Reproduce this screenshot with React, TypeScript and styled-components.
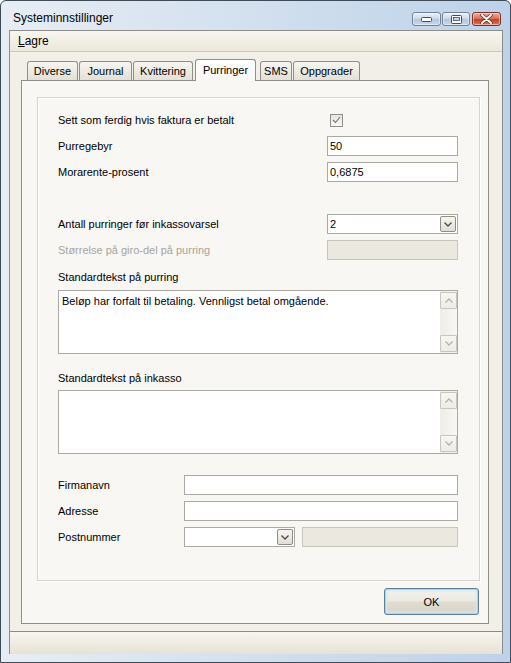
import React from 'react';
import styled, { createGlobalStyle } from 'styled-components';

const GlobalStyle = createGlobalStyle`
  html, body {
    margin: 0;
    padding: 0;
    width: 511px;
    height: 663px;
    overflow: hidden;
    background: #ffffff;
  }
  body {
    font-family: "Liberation Sans", Arial, sans-serif;
    font-size: 11px;
    color: #000;
  }
  * { box-sizing: border-box; }
`;

const Window = styled.div`
  width: 511px;
  height: 663px;
  display: flex;
  flex-direction: column;
  border: 1px solid #3f4b58;
  border-radius: 6px 6px 0 0;
  padding: 0 7px 8px 8px;
  background: linear-gradient(to right, #e7edf4 0%, #d4e1ef 45%, #bdd2e9 100%);
`;

const TitleBar = styled.div`
  height: 29px;
  display: flex;
  justify-content: space-between;
  align-items: flex-start;
`;

const Title = styled.div`
  margin-top: 10px;
  padding-left: 4px;
  font-size: 12px;
  line-height: 15px;
  color: #000;
`;

const CaptionGroup = styled.div`
  display: flex;
  gap: 2px;
  margin-top: 11px;
  margin-right: 2px;
`;

const CaptionPair = styled.div`
  display: flex;
  gap: 1px;
`;

const CaptionButton = styled.div<{ $close?: boolean; $w: number }>`
  width: ${p => p.$w}px;
  height: 14px;
  border: 1px solid ${p => (p.$close ? '#7b3226' : '#6f8196')};
  border-radius: 3px;
  display: flex;
  align-items: center;
  justify-content: center;
  background: ${p =>
    p.$close
      ? 'linear-gradient(#eab0a2 0%, #d9705b 45%, #c2402a 55%, #d67a62 100%)'
      : 'linear-gradient(#eef3f9 0%, #ccd9e8 45%, #b3c6dc 55%, #c9d8ea 100%)'};
  box-shadow: inset 0 0 0 1px rgba(255, 255, 255, 0.45);
`;

const Client = styled.div`
  flex: 1;
  display: flex;
  flex-direction: column;
  background: #f1efe8;
  border: 1px solid #8d8c86;
  border-bottom: none;
`;

const MenuBar = styled.div`
  height: 21px;
  display: flex;
  align-items: center;
  padding-left: 8px;
  background: linear-gradient(#f8f6ef, #ebe7da);
  border-bottom: 1px solid #cdc9bc;
  font-size: 12px;
`;

const Body = styled.div`
  flex: 1;
  display: flex;
  flex-direction: column;
  padding: 7px 13px 7px 11px;
`;

const TabStrip = styled.div`
  height: 22px;
  display: flex;
  align-items: flex-end;
  padding-left: 6px;
  position: relative;
  z-index: 2;
`;

const Tab = styled.div<{ $w: number; $ml: number; $active?: boolean }>`
  width: ${p => p.$w}px;
  margin-left: ${p => p.$ml}px;
  height: ${p => (p.$active ? 22 : 19)}px;
  margin-bottom: ${p => (p.$active ? 0 : 1)}px;
  border: 1px solid #8f8e88;
  border-bottom: none;
  border-radius: 3px 3px 0 0;
  display: flex;
  align-items: center;
  justify-content: center;
  padding-bottom: ${p => (p.$active ? 2 : 0)}px;
  background: ${p =>
    p.$active ? 'linear-gradient(#fdfdfc, #f8f7f3)' : 'linear-gradient(#f6f5f1, #e3e0d5)'};
  color: #000;
`;

const Panel = styled.div`
  flex: 1;
  display: flex;
  flex-direction: column;
  margin-top: -1px;
  border: 1px solid #8f8e88;
  background: #f8f7f3;
  padding: 16px 8px 8px 15px;
`;

const Group = styled.div`
  flex: 1;
  display: flex;
  flex-direction: column;
  border: 1px solid #d6d3ca;
  box-shadow: 1px 1px 0 #ffffff, inset 1px 1px 0 #ffffff;
  padding: 12px 21px 0 20px;
`;

const Row = styled.div<{ $mt: number; $h?: number }>`
  display: flex;
  align-items: center;
  height: ${p => p.$h ?? 20}px;
  margin-top: ${p => p.$mt}px;
`;

const Label = styled.div<{ $disabled?: boolean; $w?: number }>`
  flex: ${p => (p.$w ? `0 0 ${p.$w}px` : '1')};
  color: ${p => (p.$disabled ? '#a6a49e' : '#000')};
  white-space: nowrap;
`;

const Cell = styled.div<{ $w?: number }>`
  flex: ${p => (p.$w ? `0 0 ${p.$w}px` : '1')};
  display: flex;
  gap: 7px;
`;

const Field = styled.div<{ $disabled?: boolean; $w?: number }>`
  flex: ${p => (p.$w ? `0 0 ${p.$w}px` : '1')};
  height: 20px;
  display: flex;
  align-items: center;
  padding: 0 1px 0 2px;
  border: 1px solid ${p => (p.$disabled ? '#c7c4bb' : '#abaaa2')};
  background: ${p => (p.$disabled ? '#ebe8e0' : '#ffffff')};
`;

const FieldText = styled.span`
  flex: 1;
  white-space: nowrap;
`;

const DropButton = styled.div`
  width: 16px;
  height: 16px;
  border: 1px solid #8f8c84;
  border-radius: 2px;
  display: flex;
  align-items: center;
  justify-content: center;
  background: linear-gradient(#f8f6f1, #e1ddd2);
`;

const CheckBox = styled.div`
  width: 13px;
  height: 13px;
  margin-left: 3px;
  border: 1px solid #8e8f8f;
  display: flex;
  align-items: center;
  justify-content: center;
  background: linear-gradient(#e6e4dd, #fbfbf9);
`;

const Memo = styled.div`
  flex: 1;
  height: 64px;
  display: flex;
  border: 1px solid #abaaa2;
  background: #ffffff;
`;

const MemoText = styled.div`
  flex: 1;
  padding: 4px 3px;
  line-height: 13px;
`;

const ScrollBar = styled.div`
  width: 17px;
  display: flex;
  flex-direction: column;
  justify-content: space-between;
  padding: 1px 0;
  background: linear-gradient(to right, #eeede8, #f8f7f4);
`;

const ScrollButton = styled.div`
  width: 17px;
  height: 17px;
  border: 1px solid #c8c6bd;
  border-radius: 1px;
  display: flex;
  align-items: center;
  justify-content: center;
  background: linear-gradient(#f7f6f3, #eeece6);
`;

const Footer = styled.div`
  display: flex;
  justify-content: flex-end;
  margin-top: 7px;
`;

const OkButton = styled.button`
  width: 95px;
  height: 27px;
  margin-right: 1px;
  border: 1px solid #5d7d96;
  border-radius: 3px;
  font-family: "Liberation Sans", Arial, sans-serif;
  font-size: 11px;
  color: #000;
  background: linear-gradient(#f5f3ed 0%, #ede9e0 48%, #e0dcd0 52%, #d9d4c7 100%);
  box-shadow: inset 0 0 0 1px #a9d8f2, inset 0 0 3px 2px #cfe9f7;
`;

const StatusBar = styled.div`
  height: 23px;
  border-top: 1px solid #8d8b85;
  background: linear-gradient(#f7f5ee, #e6e2d5);
`;

const Chevron = ({ up, color }: { up?: boolean; color: string }) => (
  <svg width="8" height="5" viewBox="0 0 8 5">
    <polyline
      points={up ? '0.5,4.5 4,1 7.5,4.5' : '0.5,0.5 4,4 7.5,0.5'}
      fill="none"
      stroke={color}
      strokeWidth="1.3"
    />
  </svg>
);

const Combo = ({ value, w }: { value: string; w?: number }) => (
  <Field $w={w}>
    <FieldText>{value}</FieldText>
    <DropButton>
      <Chevron color="#4a4a4a" />
    </DropButton>
  </Field>
);

const TextMemo = ({ text }: { text?: string }) => (
  <Memo>
    <MemoText>{text}</MemoText>
    <ScrollBar>
      <ScrollButton>
        <Chevron up color="#b4b2aa" />
      </ScrollButton>
      <ScrollButton>
        <Chevron color="#b4b2aa" />
      </ScrollButton>
    </ScrollBar>
  </Memo>
);

const tabs = [
  { label: 'Diverse', w: 51, ml: 0 },
  { label: 'Journal', w: 53, ml: 1 },
  { label: 'Kvittering', w: 60, ml: 1 },
  { label: 'Purringer', w: 61, ml: 2, active: true },
  { label: 'SMS', w: 32, ml: 4 },
  { label: 'Oppgrader', w: 67, ml: 1 },
];

export default function App() {
  return (
    <>
      <GlobalStyle />
      <Window>
        <TitleBar>
          <Title>Systeminnstillinger</Title>
          <CaptionGroup>
            <CaptionPair>
              <CaptionButton $w={29}>
                <svg width="11" height="6" viewBox="0 0 11 6">
                  <rect x="0.5" y="1.5" width="10" height="4" rx="1" fill="#ffffff" stroke="#3c4e63" />
                </svg>
              </CaptionButton>
              <CaptionButton $w={28}>
                <svg width="11" height="9" viewBox="0 0 11 9">
                  <rect x="0.5" y="0.5" width="10" height="8" rx="1" fill="#ffffff" stroke="#3c4e63" />
                  <rect x="2.5" y="2.5" width="6" height="3" fill="#c5d4e6" stroke="#3c4e63" strokeWidth="0.8" />
                </svg>
              </CaptionButton>
            </CaptionPair>
            <CaptionButton $close $w={29}>
              <svg width="13" height="10" viewBox="0 0 13 10">
                <path d="M2 1 L11 9 M11 1 L2 9" stroke="#6e2a1f" strokeWidth="3.4" strokeLinecap="round" />
                <path d="M2 1 L11 9 M11 1 L2 9" stroke="#ffffff" strokeWidth="2" strokeLinecap="round" />
              </svg>
            </CaptionButton>
          </CaptionGroup>
        </TitleBar>
        <Client>
          <MenuBar>
            <span>
              <u>L</u>agre
            </span>
          </MenuBar>
          <Body>
            <TabStrip>
              {tabs.map(t => (
                <Tab key={t.label} $w={t.w} $ml={t.ml} $active={t.active}>
                  {t.label}
                </Tab>
              ))}
            </TabStrip>
            <Panel>
              <Group>
                <Row $mt={0}>
                  <Label>Sett som ferdig hvis faktura er betalt</Label>
                  <Cell $w={131}>
                    <CheckBox>
                      <svg width="9" height="8" viewBox="0 0 9 8">
                        <polyline points="1,4 3.5,6.5 8,1" fill="none" stroke="#6e6e6e" strokeWidth="1.1" />
                      </svg>
                    </CheckBox>
                  </Cell>
                </Row>
                <Row $mt={6}>
                  <Label>Purregebyr</Label>
                  <Field $w={131}>
                    <FieldText>50</FieldText>
                  </Field>
                </Row>
                <Row $mt={6}>
                  <Label>Morarente-prosent</Label>
                  <Field $w={131}>
                    <FieldText>0,6875</FieldText>
                  </Field>
                </Row>
                <Row $mt={32}>
                  <Label>Antall purringer før inkassovarsel</Label>
                  <Combo value="2" w={131} />
                </Row>
                <Row $mt={6}>
                  <Label $disabled>Størrelse på giro-del på purring</Label>
                  <Field $w={131} $disabled />
                </Row>
                <Row $mt={10} $h={14}>
                  <Label>Standardtekst på purring</Label>
                </Row>
                <Row $mt={6} $h={64}>
                  <Cell>
                    <TextMemo text="Beløp har forfalt til betaling. Vennligst betal omgående." />
                  </Cell>
                </Row>
                <Row $mt={17} $h={14}>
                  <Label>Standardtekst på inkasso</Label>
                </Row>
                <Row $mt={5} $h={64}>
                  <Cell>
                    <TextMemo />
                  </Cell>
                </Row>
                <Row $mt={21}>
                  <Label $w={126}>Firmanavn</Label>
                  <Field />
                </Row>
                <Row $mt={6}>
                  <Label $w={126}>Adresse</Label>
                  <Field />
                </Row>
                <Row $mt={6}>
                  <Label $w={126}>Postnummer</Label>
                  <Cell>
                    <Combo value="" w={111} />
                    <Field $disabled />
                  </Cell>
                </Row>
              </Group>
              <Footer>
                <OkButton>OK</OkButton>
              </Footer>
            </Panel>
          </Body>
          <StatusBar />
        </Client>
      </Window>
    </>
  );
}
